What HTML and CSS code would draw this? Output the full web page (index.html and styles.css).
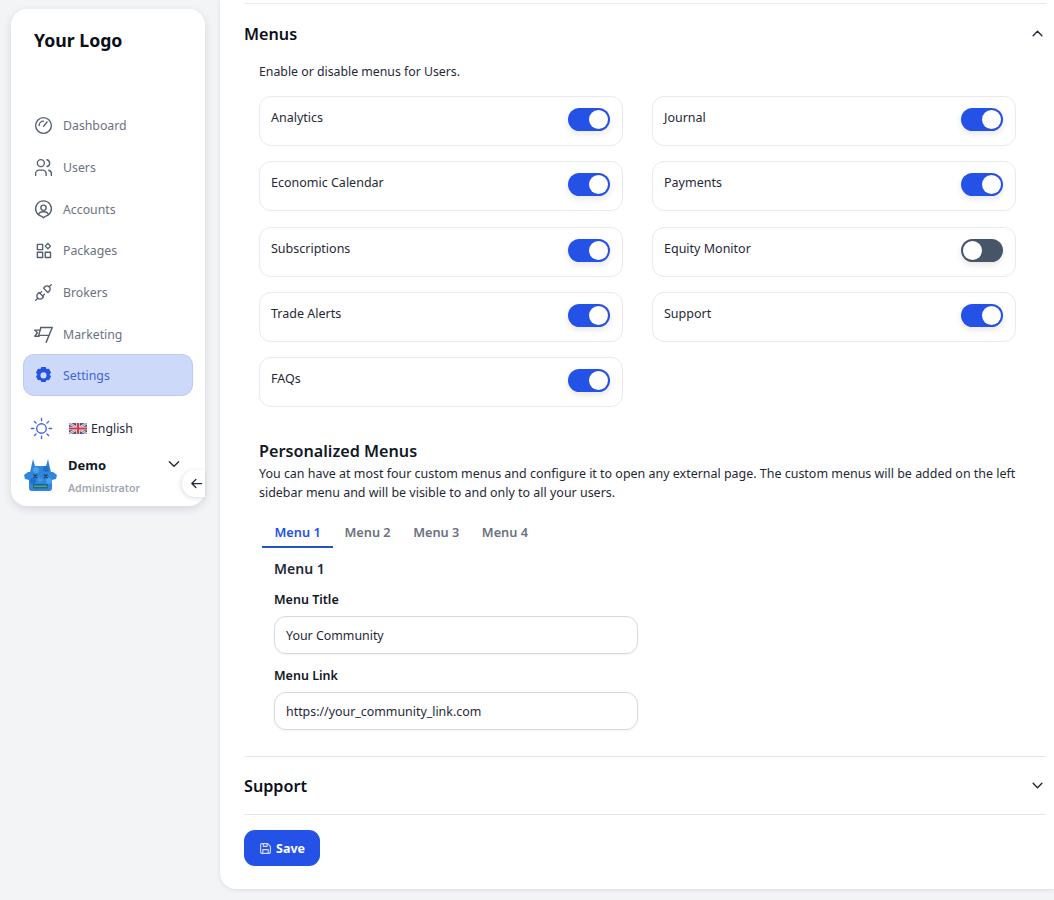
FILE: index.html
```html
<!DOCTYPE html>
<html lang="en">
<head>
<meta charset="utf-8">
<title>Settings</title>
<link rel="stylesheet" href="styles.css">
</head>
<body>
<aside class="sidebar">
  <div class="logo">Your Logo</div>
  <nav class="nav">
    <a class="nav-item"><svg class="ico" viewBox="0 0 24 24"><path d="M3 12a9 9 0 1 0 18 0a9 9 0 1 0 -18 0"/><path d="M12 13l4 -5"/><path d="M7 12a5 5 0 0 1 5 -5"/></svg><span>Dashboard</span></a>
    <a class="nav-item"><svg class="ico" viewBox="0 0 24 24"><path d="M5 7a4 4 0 1 0 8 0a4 4 0 1 0 -8 0"/><path d="M3 21v-2a4 4 0 0 1 4 -4h4a4 4 0 0 1 4 4v2"/><path d="M16 3.130a4 4 0 0 1 0 7.750"/><path d="M21 21v-2a4 4 0 0 0 -3 -3.850"/></svg><span>Users</span></a>
    <a class="nav-item"><svg class="ico" viewBox="0 0 24 24"><path d="M12 21.500l-2 -1.600a9 9 0 1 1 4 0z"/><path d="M9 10a3 3 0 1 0 6 0a3 3 0 1 0 -6 0"/><path d="M6.500 17.500a5 5 0 0 1 4.500 -3h2a5 5 0 0 1 4.500 3"/></svg><span>Accounts</span></a>
    <a class="nav-item"><svg class="ico" viewBox="0 0 24 24"><path d="M5 5h6v6h-6z"/><path d="M5 14h6v6h-6z"/><path d="M14 14h6v6h-6z"/><path d="M17 4l3 3l-3 3l-3 -3z"/></svg><span>Packages</span></a>
    <a class="nav-item"><svg class="ico" viewBox="0 0 24 24"><path d="M7 12l5 5l-1.500 1.500a3.536 3.536 0 1 1 -5 -5l1.500 -1.500z"/><path d="M17 12l-5 -5l1.500 -1.500a3.536 3.536 0 1 1 5 5l-1.500 1.500z"/><path d="M3 21l2.500 -2.500"/><path d="M18.500 5.500l2.500 -2.500"/><path d="M10 11l-2 2"/><path d="M13 14l-2 2"/></svg><span>Brokers</span></a>
    <a class="nav-item"><svg class="ico" viewBox="0 0 24 24"><path d="M9 4h13l-7 17"/><path d="M9 4l-2.500 9h11.500"/><path d="M2 7h6M2 7l3 3l-3 4h5"/></svg><span>Marketing</span></a>
    <a class="nav-item active"><svg class="ico solid" viewBox="0 0 24 24"><path fill-rule="evenodd" d="M9.600 2.200h4.800l1.100 2.500 2.700 -.3 2.400 4.200 -1.600 2.200 1.600 2.300 -2.400 4.200 -2.700 -.3 -1.100 2.500h-4.800l-1.100 -2.500 -2.700 .3 -2.400 -4.200 1.600 -2.300 -1.600 -2.200 2.400 -4.200 2.700 .3z M12 8.400a3.500 3.500 0 1 0 0 7a3.500 3.500 0 1 0 0 -7z"/></svg><span>Settings</span></a>
  </nav>
  <div class="prefs">
    <svg class="sun" viewBox="0 0 24 24"><circle cx="12" cy="12" r="5"/><path d="M12 1.500v2.500M12 20v2.500M1.500 12h2.500M20 12h2.500M4.600 4.600l1.800 1.800M17.600 17.600l1.800 1.800M4.600 19.400l1.800 -1.800M17.600 6.400l1.800 -1.800"/></svg>
    <svg class="flag" viewBox="0 0 60 36"><rect width="60" height="36" fill="#3f4f86"/><path d="M0 0L60 36M60 0L0 36" stroke="#e8e4ea" stroke-width="8"/><path d="M0 0L60 36M60 0L0 36" stroke="#c4505f" stroke-width="2.500"/><path d="M30 0V36M0 18H60" stroke="#e8e4ea" stroke-width="12"/><path d="M30 0V36M0 18H60" stroke="#d23c4c" stroke-width="7"/></svg>
    <span class="lang">English</span>
  </div>
  <div class="profile">
    <svg class="avatar" viewBox="0 0 33 33">
      <path d="M9 0l2 7h11l2 -7l2 9l1 4h2l4 3l-1 4l-4 1v8q0 3 -3 3h-17q-3 0 -3 -3v-8l-4 -1l-1 -4l4 -3h2l1 -4z" fill="#2f86dc"/>
      <circle cx="12" cy="11" r="3" fill="#4aa3ea"/><circle cx="22" cy="10" r="3" fill="#1f6fd0"/><circle cx="9" cy="22" r="3" fill="#1f6fd0"/><circle cx="25" cy="22" r="3" fill="#4aa3ea"/><circle cx="16" cy="21" r="2.500" fill="#3d97e6"/>
      <path d="M9.500 15.500l3.500 3.500M13 15.500l-3.500 3.500M20 15.500l3.500 3.500M23.500 15.500l-3.500 3.500" stroke="#22405f" stroke-width="1.300"/>
      <rect x="9" y="25" width="15" height="4.500" rx="1" fill="#1d6a74"/><path d="M10 27.200h13" stroke="#69b7a8" stroke-width="1"/>
    </svg>
    <div class="who"><div class="name">Demo</div><div class="role">Administrator</div></div>
    <svg class="chev" viewBox="0 0 24 24"><path d="M5 8.500l7 7l7 -7"/></svg>
    <button class="collapse" type="button"><svg viewBox="0 0 24 24"><path d="M20 12H5M11 5.500L4.500 12l6.500 6.500"/></svg></button>
  </div>
</aside>

<main class="panel">
  <section class="menus">
    <header class="acc-head"><h2>Menus</h2><svg class="acc-chev" viewBox="0 0 24 24"><path d="M5 15.500l7 -7l7 7"/></svg></header>
    <div class="menus-body">
      <p class="lead">Enable or disable menus for Users.</p>
      <div class="cards">
        <div class="card"><span>Analytics</span><i class="toggle"></i></div>
        <div class="card"><span>Journal</span><i class="toggle"></i></div>
        <div class="card"><span>Economic Calendar</span><i class="toggle"></i></div>
        <div class="card"><span>Payments</span><i class="toggle"></i></div>
        <div class="card"><span>Subscriptions</span><i class="toggle"></i></div>
        <div class="card"><span>Equity Monitor</span><i class="toggle off"></i></div>
        <div class="card"><span>Trade Alerts</span><i class="toggle"></i></div>
        <div class="card"><span>Support</span><i class="toggle"></i></div>
        <div class="card"><span>FAQs</span><i class="toggle"></i></div>
      </div>
      <h3 class="pm-title">Personalized Menus</h3>
      <p class="pm-text">You can have at most four custom menus and configure it to open any external page. The custom menus will be added on the left sidebar menu and will be visible to and only to all your users.</p>
      <div class="tabs">
        <span class="tab current">Menu 1</span>
        <span class="tab">Menu 2</span>
        <span class="tab">Menu 3</span>
        <span class="tab">Menu 4</span>
      </div>
      <div class="form">
        <h4>Menu 1</h4>
        <label class="field-label">Menu Title</label>
        <div class="input">Your Community</div>
        <label class="field-label">Menu Link</label>
        <div class="input">https://your_community_link.com</div>
      </div>
    </div>
  </section>
  <section class="support">
    <h2>Support</h2><svg class="acc-chev" viewBox="0 0 24 24"><path d="M5 8.500l7 7l7 -7"/></svg>
  </section>
  <button class="save" type="button"><svg viewBox="0 0 24 24"><path d="M5 3h11l5 5v11a2 2 0 0 1 -2 2h-14a2 2 0 0 1 -2 -2v-14a2 2 0 0 1 2 -2z"/><path d="M7 21v-7h10v7"/><path d="M8 3v5h7v-5"/></svg>Save</button>
</main>
</body>
</html>
```
FILE: styles.css
```css
* { box-sizing: border-box; }
html, body { height: 100%; }
body {
  margin: 0;
  width: 1054px;
  height: 900px;
  overflow: hidden;
  display: flex;
  align-items: flex-start;
  background: #f3f4f6;
  font-family: "Noto Sans", "Open Sans", sans-serif;
  color: #111827;
}

/* Sidebar */
.sidebar {
  flex: none;
  width: 194px;
  height: 497px;
  margin: 9px 15px 0 11px;
  padding: 18px 12px 0;
  background: #fff;
  border-radius: 16px;
  box-shadow: 0 3px 8px rgba(17, 24, 39, .13);
  display: flex;
  flex-direction: column;
}
.logo {
  padding-left: 11px;
  font-size: 17.700px;
  line-height: 26px;
  font-weight: 700;
  color: #0b0f1a;
}
.nav { margin-top: 52px; display: flex; flex-direction: column; }
.nav-item {
  height: 41.700px;
  padding-left: 10px;
  display: flex;
  align-items: center;
  gap: 9px;
  font-size: 12.300px;
  color: #6b7280;
}
.ico {
  width: 21px;
  height: 21px;
  flex: none;
  fill: none;
  stroke: #565f70;
  stroke-width: 1.600;
  stroke-linecap: round;
  stroke-linejoin: round;
}
.ico.solid { fill: #2451e6; stroke: none; }
.nav-item.active {
  height: 42px;
  margin-top: -1px;
  padding-left: 9px;
  background: #cdd9f8;
  border: 1px solid #bccbf5;
  border-radius: 11px;
  color: #3f63d9;
}
.prefs {
  margin-top: 18px;
  padding-left: 7px;
  height: 28px;
  display: flex;
  align-items: center;
}
.sun {
  width: 23px;
  height: 23px;
  flex: none;
  fill: none;
  stroke: #3f63e6;
  stroke-width: 1.400;
  stroke-linecap: round;
}
.flag { width: 18px; height: 11px; margin-left: 16px; flex: none; border-radius: 1px; }
.lang { margin-left: 4px; font-size: 12.300px; color: #1f2937; }
.profile {
  position: relative;
  margin: 14px -12px 0 -12px;
  padding-left: 13px;
  display: flex;
  align-items: flex-start;
}
.avatar { width: 33px; height: 33px; flex: none; margin-top: 3px; }
.who { margin-left: 11px; }
.name { font-size: 13px; line-height: 18px; font-weight: 700; color: #111827; }
.role { margin-top: 7px; font-size: 10.600px; line-height: 14px; font-weight: 600; color: #a1a7b3; }
.chev {
  position: absolute;
  left: 155px;
  top: 0;
  width: 16px;
  height: 16px;
  fill: none;
  stroke: #1f2937;
  stroke-width: 2;
  stroke-linecap: round;
  stroke-linejoin: round;
}
.collapse {
  position: absolute;
  right: 0;
  top: 14px;
  width: 23px;
  height: 27px;
  padding: 0 0 0 7px;
  border: 0;
  border-radius: 13px 0 0 13px;
  background: #fff;
  box-shadow: -1px 1px 4px rgba(17, 24, 39, .14);
}
.collapse svg {
  display: block;
  width: 15px;
  height: 15px;
  fill: none;
  stroke: #1f2937;
  stroke-width: 2;
  stroke-linecap: round;
  stroke-linejoin: round;
}

/* Main panel */
.panel {
  flex: none;
  width: 834px;
  height: 889px;
  padding: 3px 8px 0 24px;
  background: #fff;
  border-radius: 0 0 0 16px;
  box-shadow: 0 1px 4px rgba(17, 24, 39, .1);
}
.menus { border-top: 1px solid #e8eaee; }
.acc-head {
  height: 59px;
  display: flex;
  align-items: center;
  justify-content: space-between;
}
h2 {
  margin: 0;
  font-size: 16.200px;
  font-weight: 600;
  color: #0b0f1a;
}
.acc-chev {
  width: 15px;
  height: 15px;
  margin-right: 1px;
  fill: none;
  stroke: #1f2937;
  stroke-width: 2.200;
  stroke-linecap: round;
  stroke-linejoin: round;
}
.menus-body { padding-left: 15px; border-bottom: 1px solid #e5e7eb; height: 694px; }
.lead { margin: 0; font-size: 12.300px; line-height: 18px; color: #1f2937; }
.cards {
  margin-top: 15px;
  display: grid;
  grid-template-columns: 364px 364px;
  column-gap: 29px;
  row-gap: 15.300px;
}
.card {
  height: 50px;
  padding: 12px 11px 0;
  display: flex;
  justify-content: space-between;
  align-items: flex-start;
  background: #fff;
  border: 1px solid #e8eaef;
  border-radius: 12px;
  font-size: 12.500px;
  line-height: 18px;
  color: #1f2937;
}
.toggle {
  position: relative;
  display: block;
  width: 42px;
  height: 23px;
  margin-top: -1px;
  margin-right: 1px;
  background: #2451e6;
  border-radius: 12px;
  box-shadow: 0 3px 6px rgba(17, 24, 39, .1);
}
.toggle::after {
  content: "";
  position: absolute;
  top: 2px;
  right: 2px;
  width: 19px;
  height: 19px;
  background: #fff;
  border-radius: 50%;
}
.toggle.off { background: #475569; }
.toggle.off::after { right: auto; left: 2px; }
.pm-title {
  margin: 33px 0 0;
  font-size: 16.200px;
  line-height: 23px;
  font-weight: 600;
  color: #111827;
}
.pm-text { margin: 1px 0 0; font-size: 12.460px; line-height: 19px; color: #1f2937; width: 770px; }
.tabs { margin-top: 16px; display: flex; padding-left: 3px; }
.tab {
  padding: 1px 11.250px 4px;
  height: 30px;
  display: flex;
  align-items: center;
  font-size: 12.750px;
  font-weight: 600;
  color: #6b7280;
}
.tab.current {
  padding: 1px 12.500px 2px;
  color: #2451e6;
  border-bottom: 2px solid #2451c8;
}
.form { padding-left: 15px; }
.form h4 { margin: 11px 0 0; font-size: 14px; line-height: 20px; font-weight: 600; color: #1f2937; }
.field-label {
  display: block;
  margin-top: 12px;
  font-size: 12.500px;
  line-height: 18px;
  font-weight: 600;
  color: #111827;
}
.field-label + .input { margin-top: 7px; }
.input + .field-label { margin-top: 13px; }
.input {
  width: 364px;
  height: 38px;
  padding: 0 11px;
  display: flex;
  align-items: center;
  border: 1px solid #d6d9df;
  border-radius: 12px;
  box-shadow: 0 1px 2px rgba(17, 24, 39, .06);
  font-size: 12.400px;
  color: #1f2937;
}
.support {
  height: 58px;
  display: flex;
  align-items: center;
  justify-content: space-between;
  border-bottom: 1px solid #e5e7eb;
}
.save {
  margin-top: 15px;
  width: 76px;
  height: 36px;
  padding: 0;
  display: flex;
  align-items: center;
  justify-content: center;
  gap: 4px;
  background: #2451e6;
  border: 0;
  border-radius: 11px;
  font-family: inherit;
  font-size: 12.500px;
  font-weight: 700;
  color: #fff;
}
.save svg {
  width: 13px;
  height: 13px;
  fill: none;
  stroke: #d5def9;
  stroke-width: 2;
  stroke-linecap: round;
  stroke-linejoin: round;
}
```
